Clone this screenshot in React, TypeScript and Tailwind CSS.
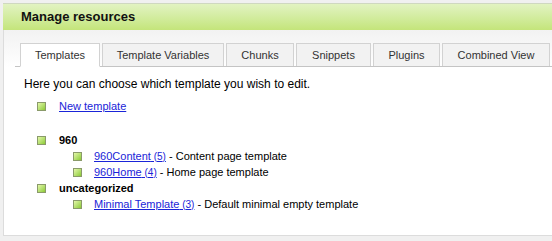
import React from 'react';

const TABS = [
  { label: 'Templates', w: 'w-[80px]', active: true },
  { label: 'Template Variables', w: 'w-[122px]' },
  { label: 'Chunks', w: 'w-[68px]' },
  { label: 'Snippets', w: 'w-[75px]' },
  { label: 'Plugins', w: 'w-[67px]' },
  { label: 'Combined View', w: 'w-[108px]' },
];

function Bullet() {
  return (
    <span className="inline-block w-[9px] h-[9px] border border-[#8a9a6a] bg-gradient-to-br from-[#e4f7a8] to-[#8ccb2e] shrink-0" />
  );
}

function Item({ name, count, desc, sub }: { name: string; count?: number; desc?: string; sub?: boolean }) {
  return (
    <div className={`flex items-center h-[16px] text-[11px] ${sub ? 'pl-[69px]' : 'pl-[33px]'}`}>
      <Bullet />
      <span className={sub ? 'ml-[12px]' : 'ml-[13px]'}>
        <a href="#" className="text-[#1a24d8] underline">
          {name}
          {count !== undefined && <span className="text-[10px]"> ({count})</span>}
        </a>
        {desc && <span> - {desc}</span>}
      </span>
    </div>
  );
}

function Category({ name }: { name: string }) {
  return (
    <div className="flex items-center h-[16px] pl-[33px] text-[11px]">
      <Bullet />
      <span className="ml-[13px] font-bold">{name}</span>
    </div>
  );
}

export default function App() {
  return (
    <div className="w-[552px] h-[241px] bg-[#f0f0f0] overflow-hidden pt-[3px] text-[12px] text-black [font-family:'Liberation_Sans',Arial,sans-serif]">
      <div className="ml-[3px] h-[27px] border-t border-[#cfd8c0] bg-gradient-to-b from-[#e2f3c2] to-[#c4e57a] flex items-center pl-[18px]">
        <span className="font-bold text-[13px] text-[#111]">Manage resources</span>
      </div>
      <div className="ml-[3px] h-[206px] bg-white border-l border-b border-[#dcdcdc]">
        <div className="pt-[13px] pl-[11px] bg-gradient-to-b from-[#f2f2f2] to-white">
          <div className="flex items-end gap-[2px] pl-[5px] border-b border-[#c4c4c4] h-[24px]">
            {TABS.map((t) => (
              <div
                key={t.label}
                className={`${t.w} flex items-center justify-center text-[11px] text-[#333] border border-[#d2d2d2] ${
                  t.active ? 'bg-white border-b-white -mb-px h-[24px]' : 'bg-[#f2f2f2] border-b-0 h-[23px]'
                }`}
              >
                {t.label}
              </div>
            ))}
          </div>
        </div>
        <div className="pt-[9px]">
          <div className="pl-[20px] h-[16px] flex items-center">Here you can choose which template you wish to edit.</div>
          <div className="mt-[6px]">
            <Item name="New template" />
          </div>
          <div className="mt-[18px]">
            <Category name="960" />
            <Item sub name="960Content" count={5} desc="Content page template" />
            <Item sub name="960Home" count={4} desc="Home page template" />
            <Category name="uncategorized" />
            <Item sub name="Minimal Template" count={3} desc="Default minimal empty template" />
          </div>
        </div>
      </div>
    </div>
  );
}
